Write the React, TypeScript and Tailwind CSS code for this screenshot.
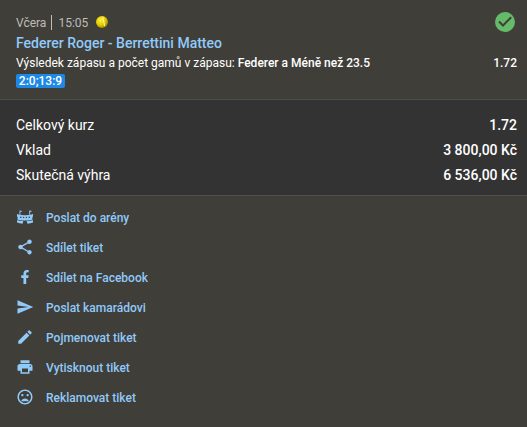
import type { ComponentType } from "react"
import { FaFacebookF } from "react-icons/fa"
import { MdEdit, MdMoodBad, MdPrint, MdSend, MdShare } from "react-icons/md"

type IconProps = { className?: string }

type TicketAction = {
  label: string
  icon: ComponentType<IconProps>
  iconClassName?: string
}

const ArenaIcon = ({ className }: IconProps) => (
  <svg viewBox="0 0 18 18" fill="currentColor" className={className}>
    <path d="M3.500 2.500h.9v4.200h-.9zM13.200 2.500h.9v4.200h-.9z" />
    <path d="M4.400 2.500l2 .8-2 1zM14.100 2.500l2 .8-2 1z" />
    <path
      fillRule="evenodd"
      d="M1 5.900l1.500.5c3.900 1 9.100 1 13 0l1.500-.5v2.500l-.6.600v2.700c-3.700 1.100-11.100 1.100-14.800 0V9L1 8.400zM4.200 8.600v1.300h1.200V8.700zM7 8.800v1.300h1.200V8.900zM9.800 8.900v1.200H11V8.800zM12.600 8.700v1.200h1.200V8.600z"
    />
    <path d="M1 12.200c1.800.5 3.900.8 6.300.8l-.8 2.700c-2-.1-3.800-.5-5.500-1.200zM17 12.200c-1.800.5-3.900.8-6.300.8l.8 2.700c2-.1 3.800-.5 5.500-1.200z" />
  </svg>
)

const TennisBall = () => (
  <svg viewBox="0 0 12 12" className="mb-px ml-2 size-3">
    <defs>
      <radialGradient id="ball" cx="38%" cy="35%" r="68%">
        <stop offset="0" stopColor="#fff332" />
        <stop offset="0.6" stopColor="#e4c900" />
        <stop offset="1" stopColor="#9c8200" />
      </radialGradient>
    </defs>
    <circle cx="6" cy="6" r="6" fill="url(#ball)" />
    <path
      d="M7 .8C6.300 4 8.600 6 8.500 10"
      fill="none"
      stroke="#fffbd0"
      strokeWidth="0.9"
    />
  </svg>
)

const actions: TicketAction[] = [
  { label: "Poslat do arény", icon: ArenaIcon },
  { label: "Sdílet tiket", icon: MdShare },
  { label: "Sdílet na Facebook", icon: FaFacebookF, iconClassName: "size-3.5" },
  { label: "Poslat kamarádovi", icon: MdSend },
  { label: "Pojmenovat tiket", icon: MdEdit },
  { label: "Vytisknout tiket", icon: MdPrint },
  { label: "Reklamovat tiket", icon: MdMoodBad }
]

const summary = [
  { label: "Celkový kurz", value: "1.72" },
  { label: "Vklad", value: "3 800,00 Kč" },
  { label: "Skutečná výhra", value: "6 536,00 Kč" }
]

const App = () => {
  return (
    <main className="h-[427px] w-[527px] overflow-hidden bg-[#403e39] font-['Roboto',sans-serif] text-white">
      <section className="h-[99px] pt-3 pr-[10px] pl-4">
        <div className="flex h-[21px] justify-between">
          <div className="flex h-[21px] items-center text-xs text-[#bdbcba]">
            <span>Včera</span>
            <span className="mr-[6px] ml-[5px] h-[15px] w-px bg-[#bdbcba]" />
            <span>15:05</span>
            <TennisBall />
          </div>
          <span className="mr-0.5 flex size-5 items-center justify-center rounded-full bg-[#66bb6a]">
            <svg viewBox="0 0 20 20" className="size-5">
              <path
                d="M4 9.500l4 4L16.200 5.200"
                fill="none"
                stroke="#403e39"
                strokeWidth="2"
              />
            </svg>
          </span>
        </div>
        <h1 className="h-[21px] text-sm leading-5 font-medium text-[#90caf9]">
          Federer Roger - Berrettini Matteo
        </h1>
        <div className="flex h-[18px] justify-between text-xs leading-[18px]">
          <p>
            Výsledek zápasu a počet gamů v zápasu:{" "}
            <span className="font-medium">Federer a Méně než 23.5</span>
          </p>
          <span className="font-medium">1.72</span>
        </div>
        <span className="mt-0.5 block h-3.5 w-[49px] rounded-xs bg-[#1e88e5] text-center text-xs leading-[15px] font-medium">
          2:0;13:9
        </span>
      </section>

      <section className="h-[97px] border-y border-[#504f4d] bg-[#333333] pt-[13px] pr-[10px] pl-4 text-sm leading-[25px]">
        {summary.map((row) => (
          <div key={row.label} className="flex justify-between">
            <span>{row.label}</span>
            <span className="font-medium">{row.value}</span>
          </div>
        ))}
      </section>

      <ul className="pt-[7px] pl-4 text-xs font-medium text-[#90caf9]">
        {actions.map(({ label, icon: Icon, iconClassName }) => (
          <li key={label} className="flex h-[30px] items-center">
            <span className="mr-3 mb-0.5 flex size-[18px] items-center justify-center">
              <Icon className={iconClassName ?? "size-[18px]"} />
            </span>
            {label}
          </li>
        ))}
      </ul>
    </main>
  )
}

export default App
